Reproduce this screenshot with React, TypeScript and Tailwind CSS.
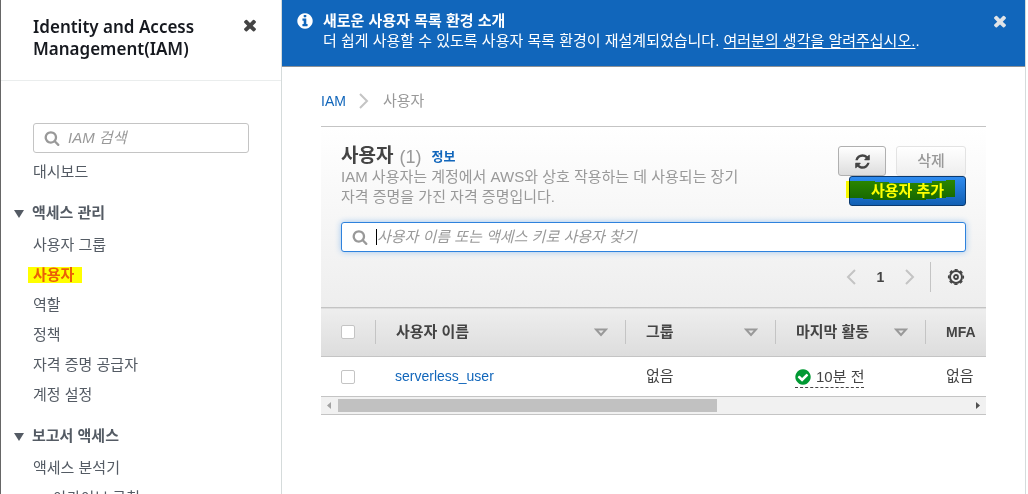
import { useState } from "react";
import type { ReactNode } from "react";
import clsx from "clsx";

const REFRESH =
  "M1639 1056q0 5-1 7-64 268-268 434.5t-478 166.5q-146 0-282.5-55t-243.5-157l-129 129q-19 19-45 19t-45-19-19-45v-448q0-26 19-45t45-19h448q26 0 45 19t19 45-19 45l-137 137q71 66 161 102t187 36q134 0 250-65t186-179q11-17 53-117 8-23 30-23h192q13 0 22.5 9.5t9.5 22.5zm25-800v448q0 26-19 45t-45 19h-448q-26 0-45-19t-19-45 19-45l138-138q-148-137-349-137-134 0-250 65t-186 179q-11 17-53 117-8 23-30 23h-199q-13 0-22.5-9.5t-9.5-22.5v-7q65-268 270-434.5t480-166.5q146 0 284 55.5t245 156.5l130-129q19-19 45-19t45 19 19 45z";
const TIMES =
  "M1490 1322q0 40-28 68l-136 136q-28 28-68 28t-68-28l-294-294-294 294q-28 28-68 28t-68-28l-136-136q-28-28-28-68t28-68l294-294-294-294q-28-28-28-68t28-68l136-136q28-28 68-28t68 28l294 294 294-294q28-28 68-28t68 28l136 136q28 28 28 68t-28 68l-294 294 294 294q28 28 28 68z";
const SEARCH =
  "M1216 832q0-185-131.5-316.5t-316.5-131.5-316.5 131.5-131.5 316.5 131.5 316.5 316.5 131.5 316.5-131.5 131.5-316.5zm512 832q0 52-38 90t-90 38q-54 0-90-38l-343-342q-179 124-399 124-143 0-273.5-55.5t-225-150-150-225-55.5-273.5 55.5-273.5 150-225 225-150 273.5-55.5 273.5 55.5 225 150 150 225 55.5 273.5q0 220-124 399l343 343q37 37 37 90z";
const INFO =
  "M1152 1376v-160q0-14-9-23t-23-9h-96v-512q0-14-9-23t-23-9h-320q-14 0-23 9t-9 23v160q0 14 9 23t23 9h96v320h-96q-14 0-23 9t-9 23v160q0 14 9 23t23 9h448q14 0 23-9t9-23zm-128-896v-160q0-14-9-23t-23-9h-192q-14 0-23 9t-9 23v160q0 14 9 23t23 9h192q14 0 23-9t9-23zm640 416q0 209-103 385.5t-279.5 279.5-385.5 103-385.5-103-279.5-279.5-103-385.5 103-385.5 279.5-279.5 385.5-103 385.5 103 279.5 279.5 103 385.5z";
const CHECK =
  "M1412 734q0-28-18-46l-91-90q-19-19-45-19t-45 19l-408 407-226-226q-19-19-45-19t-45 19l-91 90q-18 18-18 46 0 27 18 45l362 362q19 19 45 19 27 0 46-19l543-543q18-18 18-45zm252 162q0 209-103 385.5t-279.5 279.5-385.5 103-385.5-103-279.5-279.5-103-385.5 103-385.5 279.5-279.5 385.5-103 385.5 103 279.5 279.5 103 385.5z";

const Icon = ({ d, className }: { d: string; className?: string }) => (
  <svg viewBox="0 0 1792 1792" fill="currentColor" aria-hidden="true" className={clsx("shrink-0", className)}>
    <path d={d} />
  </svg>
);

const Chevron = ({ left }: { left?: boolean }) => (
  <svg width="10" height="16" viewBox="0 0 10 16" fill="none" stroke="#c4c4c4" strokeWidth="2" aria-hidden="true">
    <path d={left ? "M9 1L2 8l7 7" : "M1 1l7 7-7 7"} />
  </svg>
);

const Gear = () => (
  <svg width="18" height="18" viewBox="0 0 18 18" fill="none" stroke="#444" aria-hidden="true">
    <circle cx="9" cy="9" r="6" strokeWidth="2" />
    <circle cx="9" cy="9" r="7.4" strokeWidth="1.4" strokeDasharray="3.2 2.61" strokeDashoffset="1.6" />
    <circle cx="9" cy="9" r="2" strokeWidth="1.8" />
  </svg>
);

const CheckBox = ({ label }: { label: string }) => (
  <input
    type="checkbox"
    aria-label={label}
    className="block size-3.5 appearance-none rounded-xs border border-[#c4c4c4] bg-white checked:bg-[#1166bb]"
  />
);

const sections = [
  {
    title: "액세스 관리",
    items: ["사용자 그룹", "사용자", "역할", "정책", "자격 증명 공급자", "계정 설정"],
  },
  { title: "보고서 액세스", items: ["액세스 분석기"], children: ["아카이브 규칙"] },
];

const NavLink = ({ children, active }: { children: ReactNode; active?: boolean }) => (
  <li className="flex h-[30px] items-center pt-0.5">
    <a
      href="#"
      aria-current={active ? "page" : undefined}
      className={clsx(
        "leading-4",
        active ? "-ml-[5px] bg-[#ffff00] pr-2 pl-[5px] font-bold text-[#eb5f07]" : "text-[#545b64]"
      )}>
      {children}
    </a>
  </li>
);

const SideBar = () => {
  const [query, setQuery] = useState("");

  return (
    <aside className="w-[282px] shrink-0 overflow-hidden border-r border-l border-r-[#d5dbdb] border-l-[#666]">
      <div className="flex h-[81px] items-start justify-between border-b border-[#eaeded] pt-4 pr-[22px] pl-8">
        <h2 className="w-[190px] font-['Noto_Sans',sans-serif] text-[17px] leading-[22px] font-semibold text-[#16191f]">
          Identity and Access Management(IAM)
        </h2>
        <button type="button" aria-label="닫기" className="text-[#444]">
          <Icon d={TIMES} className="size-[18px]" />
        </button>
      </div>
      <nav className="px-8 pt-[42px]">
        <label className="mb-[3px] flex h-[30px] items-center gap-2 rounded-[3px] border border-[#c4c4c4] bg-white pl-2.5 text-[#999]">
          <Icon d={SEARCH} className="size-4" />
          <input
            type="text"
            aria-label="IAM 검색"
            placeholder="IAM 검색"
            value={query}
            onChange={(e) => setQuery(e.target.value)}
            className="w-full min-w-0 text-[#444] italic outline-none placeholder:text-[#999]"
          />
        </label>
        <ul>
          <NavLink>대시보드</NavLink>
        </ul>
        {sections.map((section) => (
          <div key={section.title} className="mt-3">
            <button type="button" className="-ml-[19px] flex h-[31px] items-center gap-2 font-bold text-[#545b64]">
              <svg width="10" height="8" viewBox="0 0 10 8" fill="#545b64" aria-hidden="true">
                <path d="M0 0h10L5 8z" />
              </svg>
              {section.title}
            </button>
            <ul>
              {section.items.map((item) => (
                <NavLink key={item} active={item === "사용자"}>
                  {item}
                </NavLink>
              ))}
            </ul>
            {section.children && (
              <ul className="pl-5">
                {section.children.map((item) => (
                  <NavLink key={item}>{item}</NavLink>
                ))}
              </ul>
            )}
          </div>
        ))}
      </nav>
    </aside>
  );
};

const Banner = () => (
  <div className="flex h-[67px] items-start border-b border-[#8c9196] bg-[#1166bb] pt-[11px] pr-4 pl-3.5 text-white">
    <Icon d={INFO} className="mt-px size-[18px]" />
    <div className="ml-[9px] flex-1 leading-5">
      <p className="font-bold">새로운 사용자 목록 환경 소개</p>
      <p>
        더 쉽게 사용할 수 있도록 사용자 목록 환경이 재설계되었습니다.{" "}
        <a href="#" className="underline underline-offset-2">
          여러분의 생각을 알려주십시오.
        </a>
        .
      </p>
    </div>
    <button type="button" aria-label="알림 닫기" className="mt-px text-[#e0e4e8]">
      <Icon d={TIMES} className="size-[18px]" />
    </button>
  </div>
);

const HeaderCell = ({ children, sortable }: { children: ReactNode; sortable?: boolean }) => (
  <th scope="col" className="p-0 text-left font-bold">
    <div className="flex h-6 items-center justify-between border-l border-[#c4c4c4] pr-[17px] pl-5 whitespace-nowrap">
      {children}
      {sortable && (
        <svg width="14" height="9" viewBox="0 0 14 9" fill="none" stroke="#999" strokeWidth="2" aria-hidden="true">
          <path d="M2 1.500h10L7 7z" />
        </svg>
      )}
    </div>
  </th>
);

const UserTable = () => (
  <div className="overflow-hidden">
    <table className="w-full table-fixed border-collapse">
      <colgroup>
        <col className="w-[54px]" />
        <col />
        <col className="w-[150px]" />
        <col className="w-[150px]" />
        <col className="w-[61px]" />
      </colgroup>
      <thead>
        <tr className="h-[49px] border-y border-[#c4c4c4] bg-linear-to-b from-[#eee] to-[#ddd]">
          <th scope="col" className="p-0 pl-5">
            <CheckBox label="모두 선택" />
          </th>
          <HeaderCell sortable>사용자 이름</HeaderCell>
          <HeaderCell sortable>그룹</HeaderCell>
          <HeaderCell sortable>마지막 활동</HeaderCell>
          <HeaderCell>
            <span className="text-sm">MFA</span>
          </HeaderCell>
        </tr>
      </thead>
      <tbody>
        <tr className="h-10 border-b border-[#c4c4c4]">
          <td className="p-0 pl-5">
            <CheckBox label="serverless_user 선택" />
          </td>
          <td className="p-0 pl-5">
            <a href="#" className="text-sm text-[#1166bb]">
              serverless_user
            </a>
          </td>
          <td className="p-0 pl-[21px]">없음</td>
          <td className="p-0 pl-5">
            <span className="flex w-fit items-center gap-1 border-b border-dashed border-[#444] pt-px leading-5">
              <Icon d={CHECK} className="-ml-px size-[18px] text-[#009933]" />
              10분 전
            </span>
          </td>
          <td className="p-0 pl-[21px] whitespace-nowrap">없음</td>
        </tr>
      </tbody>
    </table>
    <div className="flex h-[18px] items-center border-b border-[#c4c4c4] bg-[#f1f1f1]">
      <svg width="17" height="17" viewBox="0 0 17 17" fill="#a3a3a3" aria-hidden="true">
        <path d="M10 5v7L6 8.500z" />
      </svg>
      <div className="flex-1">
        <div className="h-[13px] w-3/5 bg-[#c1c1c1]" />
      </div>
      <svg width="17" height="17" viewBox="0 0 17 17" fill="#505050" aria-hidden="true">
        <path d="M7 5v7l4-3.500z" />
      </svg>
    </div>
  </div>
);

const UserPanel = () => {
  const [filter, setFilter] = useState("");

  return (
    <section className="border-t border-[#c4c4c4]">
      <div className="bg-linear-to-b from-white to-[#eee] px-5 pt-[19px] pb-[15px]">
        <div className="flex items-start justify-between">
          <div className="max-w-[400px] break-keep">
            <h1 className="flex h-[21px] items-center text-[19px] font-bold">
              사용자
              <span className="ml-1.5 text-lg font-normal text-[#999]">(1)</span>
              <a href="#" className="ml-2.5 text-[13px] text-[#1166bb]">
                정보
              </a>
            </h1>
            <p className="leading-5 text-[#999]">
              IAM 사용자는 계정에서 AWS와 상호 작용하는 데 사용되는 장기 자격 증명을 가진 자격 증명입니다.
            </p>
          </div>
          <div className="flex w-32 shrink-0 flex-wrap justify-end">
            <button
              type="button"
              aria-label="새로 고침"
              className="mr-2.5 flex h-[30px] w-12 items-center justify-center rounded-[3px] border border-[#b0b0b0] bg-linear-to-b from-white to-[#ddd]">
              <Icon d={REFRESH} className="size-[17px]" />
            </button>
            <button
              type="button"
              disabled
              className="h-[30px] w-[70px] rounded-[3px] border border-[#e3e3e3] bg-linear-to-b from-white to-[#eee] font-medium text-[#999]">
              삭제
            </button>
            <button
              type="button"
              className="relative h-[30px] w-[117px] rounded-[3px] border border-[#0a3a70] bg-linear-to-b from-[#2e8bef] to-[#1160b4] font-bold text-white">
              사용자 추가
              {/* marker stroke */}
              <svg
                width="110"
                height="20"
                viewBox="0 0 110 20"
                fill="#ffff00"
                aria-hidden="true"
                className="absolute top-[3px] -left-1 mix-blend-multiply">
                <path d="M0 1h29v1h14v1h43V1h14V0h9v17h-9v1h-10v1H80v1H27v-1H17v-1H0z" />
              </svg>
            </button>
          </div>
        </div>
        <label className="mt-[15px] flex h-[30px] items-center rounded-[3px] border border-[#2e82dd] bg-white pl-2.5 text-[#999] shadow-[0_0_6px_#9cc4ee]">
          <Icon d={SEARCH} className="size-4" />
          <span className="ml-2 h-4 w-px bg-black" />
          <input
            type="text"
            aria-label="사용자 찾기"
            placeholder="사용자 이름 또는 액세스 키로 사용자 찾기"
            value={filter}
            onChange={(e) => setFilter(e.target.value)}
            className="w-full min-w-0 text-[#444] italic outline-none placeholder:text-[#999]"
          />
        </label>
        <div className="mt-2.5 flex h-[30px] items-center justify-end pr-px">
          <button type="button" aria-label="이전 페이지">
            <Chevron left />
          </button>
          <span className="w-[49px] text-center text-sm font-bold">1</span>
          <button type="button" aria-label="다음 페이지">
            <Chevron />
          </button>
          <span className="mr-4 ml-[15px] h-[30px] w-px bg-[#c4c4c4]" />
          <button type="button" aria-label="설정">
            <Gear />
          </button>
        </div>
      </div>
      <UserTable />
    </section>
  );
};

const App = () => (
  <div className="flex h-screen overflow-hidden bg-white pr-0.5 font-['Liberation_Sans','Noto_Sans_CJK_KR',sans-serif] text-[15px] text-[#444]">
    <SideBar />
    <main className="min-w-0 flex-1 border-r border-[#d5dbdb]">
      <Banner />
      <div className="px-[39px]">
        <nav aria-label="breadcrumb" className="flex h-[59px] items-center pt-[9px]">
          <a href="#" className="text-sm text-[#1166bb]">
            IAM
          </a>
          <span className="mr-3.5 ml-[13px]">
            <Chevron />
          </span>
          <span className="text-[#999]">사용자</span>
        </nav>
        <UserPanel />
      </div>
    </main>
  </div>
);

export default App;
